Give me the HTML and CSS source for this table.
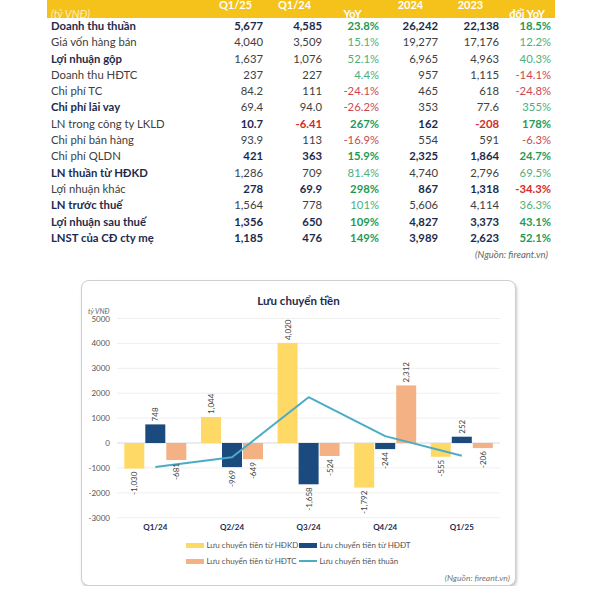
FILE: index.html
```html
<!DOCTYPE html>
<html lang="vi">
<head>
<meta charset="utf-8">
<title>Kết quả kinh doanh</title>
<link rel="stylesheet" href="styles.css">
</head>
<body>
<div class="report">
  <div class="thead">
    <div class="hcell unit"><span>&nbsp;</span><span>(tỷ VNĐ)</span></div>
    <div class="hcell"><span>Q1/25</span><span>&nbsp;</span></div>
    <div class="hcell"><span>Q1/24</span><span>&nbsp;</span></div>
    <div class="hcell"><span>&nbsp;</span><span>YoY</span></div>
    <div class="hcell"><span>2024</span><span>&nbsp;</span></div>
    <div class="hcell"><span>2023</span><span>&nbsp;</span></div>
    <div class="hcell"><span>&nbsp;</span><span>đổi YoY</span></div>
  </div>

  <div class="row"><div class="lbl b">Doanh thu thuần</div><div class="v b">5,677</div><div class="v b">4,585</div><div class="v g b">23.8%</div><div class="v b">26,242</div><div class="v b">22,138</div><div class="v g b">18.5%</div></div>
  <div class="row"><div class="lbl">Giá vốn hàng bán</div><div class="v">4,040</div><div class="v">3,509</div><div class="v g">15.1%</div><div class="v">19,277</div><div class="v">17,176</div><div class="v g">12.2%</div></div>
  <div class="row"><div class="lbl b">Lợi nhuận gộp</div><div class="v">1,637</div><div class="v">1,076</div><div class="v g">52.1%</div><div class="v">6,965</div><div class="v">4,963</div><div class="v g">40.3%</div></div>
  <div class="row"><div class="lbl">Doanh thu HĐTC</div><div class="v">237</div><div class="v">227</div><div class="v g">4.4%</div><div class="v">957</div><div class="v">1,115</div><div class="v r">-14.1%</div></div>
  <div class="row"><div class="lbl">Chi phí TC</div><div class="v">84.2</div><div class="v">111</div><div class="v r">-24.1%</div><div class="v">465</div><div class="v">618</div><div class="v r">-24.8%</div></div>
  <div class="row"><div class="lbl b">Chi phí lãi vay</div><div class="v">69.4</div><div class="v">94.0</div><div class="v r">-26.2%</div><div class="v">353</div><div class="v">77.6</div><div class="v g">355%</div></div>
  <div class="row"><div class="lbl">LN trong công ty LKLD</div><div class="v b">10.7</div><div class="v r b">-6.41</div><div class="v g b">267%</div><div class="v b">162</div><div class="v r b">-208</div><div class="v g b">178%</div></div>
  <div class="row"><div class="lbl">Chi phí bán hàng</div><div class="v">93.9</div><div class="v">113</div><div class="v r">-16.9%</div><div class="v">554</div><div class="v">591</div><div class="v r">-6.3%</div></div>
  <div class="row"><div class="lbl">Chi phí QLDN</div><div class="v b">421</div><div class="v b">363</div><div class="v g b">15.9%</div><div class="v b">2,325</div><div class="v b">1,864</div><div class="v g b">24.7%</div></div>
  <div class="row"><div class="lbl b">LN thuần từ HĐKD</div><div class="v">1,286</div><div class="v">709</div><div class="v g">81.4%</div><div class="v">4,740</div><div class="v">2,796</div><div class="v g">69.5%</div></div>
  <div class="row"><div class="lbl">Lợi nhuận khác</div><div class="v b">278</div><div class="v b">69.9</div><div class="v g b">298%</div><div class="v b">867</div><div class="v b">1,318</div><div class="v r b">-34.3%</div></div>
  <div class="row"><div class="lbl b">LN trước thuế</div><div class="v">1,564</div><div class="v">778</div><div class="v g">101%</div><div class="v">5,606</div><div class="v">4,114</div><div class="v g">36.3%</div></div>
  <div class="row"><div class="lbl b">Lợi nhuận sau thuế</div><div class="v b">1,356</div><div class="v b">650</div><div class="v g b">109%</div><div class="v b">4,827</div><div class="v b">3,373</div><div class="v g b">43.1%</div></div>
  <div class="row"><div class="lbl b">LNST của CĐ cty mẹ</div><div class="v b">1,185</div><div class="v b">476</div><div class="v g b">149%</div><div class="v b">3,989</div><div class="v b">2,623</div><div class="v g b">52.1%</div></div>

  <div class="src">(Nguồn: fireant.vn)</div>
</div>

<div class="card">
  <div class="ctitle">Lưu chuyển tiền</div>
  <svg class="chart" width="433" height="228" viewBox="0 0 433 228">
    <g class="grid">
      <line x1="35" x2="418" y1="10.5" y2="10.5"/>
      <line x1="35" x2="418" y1="35.4" y2="35.4"/>
      <line x1="35" x2="418" y1="60.3" y2="60.3"/>
      <line x1="35" x2="418" y1="85.2" y2="85.2"/>
      <line x1="35" x2="418" y1="110.1" y2="110.1"/>
      <line x1="35" x2="418" y1="159.9" y2="159.9"/>
      <line x1="35" x2="418" y1="184.8" y2="184.8"/>
      <line x1="35" x2="418" y1="209.7" y2="209.7"/>
    </g>
    <line class="zero" x1="35" x2="418" y1="135" y2="135"/>
    <text class="unitlbl" x="6" y="5.5">tỷ VNĐ</text>
    <g class="ylbl">
      <text x="28" y="13.5">5000</text>
      <text x="28" y="38.4">4000</text>
      <text x="28" y="63.3">3000</text>
      <text x="28" y="88.2">2000</text>
      <text x="28" y="113.1">1000</text>
      <text x="28" y="138">0</text>
      <text x="28" y="162.9">-1000</text>
      <text x="28" y="187.8">-2000</text>
      <text x="28" y="212.7">-3000</text>
    </g>
    <g class="bars">
      <rect class="y" x="42.3" y="135" width="20" height="25.6"/>
      <rect class="n" x="63.3" y="116.4" width="20" height="18.6"/>
      <rect class="s" x="84.3" y="135" width="20" height="17"/>

      <rect class="y" x="119" y="109" width="20" height="26"/>
      <rect class="n" x="140" y="135" width="20" height="24.1"/>
      <rect class="s" x="161" y="135" width="20" height="16.2"/>

      <rect class="y" x="195.6" y="34.9" width="20" height="100.1"/>
      <rect class="n" x="216.6" y="135" width="20" height="41.3"/>
      <rect class="s" x="237.6" y="135" width="20" height="13"/>

      <rect class="y" x="272.2" y="135" width="20" height="44.6"/>
      <rect class="n" x="293.2" y="135" width="20" height="6.1"/>
      <rect class="s" x="314.2" y="77.4" width="20" height="57.6"/>

      <rect class="y" x="348.8" y="135" width="20" height="13.8"/>
      <rect class="n" x="369.8" y="128.7" width="20" height="6.3"/>
      <rect class="s" x="390.8" y="135" width="20" height="5.1"/>
    </g>
    <polyline class="net" points="73.3,159 150,149.3 226.6,89.2 303.2,128.1 379.8,147.7"/>
    <g class="vlbl">
      <text class="neg" transform="translate(55.3,163.6) rotate(-90)">-1,030</text>
      <text transform="translate(76.3,113.4) rotate(-90)">748</text>
      <text class="neg" transform="translate(97.3,155) rotate(-90)">-681</text>

      <text transform="translate(132,106) rotate(-90)">1,044</text>
      <text class="neg" transform="translate(153,162.1) rotate(-90)">-969</text>
      <text class="neg" transform="translate(174,154.2) rotate(-90)">-649</text>

      <text transform="translate(208.6,31.9) rotate(-90)">4,020</text>
      <text class="neg" transform="translate(229.6,179.3) rotate(-90)">-1,658</text>
      <text class="neg" transform="translate(250.6,151) rotate(-90)">-524</text>

      <text class="neg" transform="translate(285.2,182.6) rotate(-90)">-1,792</text>
      <text class="neg" transform="translate(306.2,144.1) rotate(-90)">-244</text>
      <text transform="translate(327.2,74.4) rotate(-90)">2,312</text>

      <text class="neg" transform="translate(361.8,151.8) rotate(-90)">-555</text>
      <text transform="translate(382.8,125.7) rotate(-90)">252</text>
      <text class="neg" transform="translate(403.8,143.1) rotate(-90)">-206</text>
    </g>
    <g class="xlbl">
      <text x="73.3" y="222">Q1/24</text>
      <text x="150" y="222">Q2/24</text>
      <text x="226.6" y="222">Q3/24</text>
      <text x="303.2" y="222">Q4/24</text>
      <text x="379.8" y="222">Q1/25</text>
    </g>
  </svg>
  <div class="legend">
    <div class="li"><span class="sw sw-y"></span>Lưu chuyển tiền từ HĐKD</div>
    <div class="li"><span class="sw sw-n"></span>Lưu chuyển tiền từ HĐĐT</div>
    <div class="li"><span class="sw sw-s"></span>Lưu chuyển tiền từ HĐTC</div>
    <div class="li"><span class="sw sw-l"></span>Lưu chuyển tiền thuần</div>
  </div>
  <div class="csrc">(Nguồn: fireant.vn)</div>
</div>
</body>
</html>
```
FILE: styles.css
```css
body {
  margin: 0;
  background: #fff;
  font-family: Lato, "Open Sans", "Noto Sans", sans-serif;
}

.report {
  width: 508px;
  margin-left: 47px;
}

.thead,
.row {
  display: grid;
  grid-template-columns: 161px 59px 59px 57px 59px 61px 52px;
}

.thead {
  height: 18px;
  overflow: hidden;
  background: #f4c21b;
  color: #fff;
  font-size: 11px;
  font-weight: 700;
}

.hcell {
  display: flex;
  flex-direction: column;
  justify-content: flex-end;
  align-items: center;
  padding: 0 4px 3px 0;
  line-height: 9px;
  white-space: nowrap;
}

.hcell.unit {
  align-items: flex-start;
  padding-left: 4px;
  font-weight: 400;
  font-style: italic;
  color: rgba(255, 255, 255, 0.72);
}

.row {
  height: 16.3px;
  line-height: 16.3px;
  font-size: 11.3px;
  color: #404040;
}

.lbl {
  padding-left: 4px;
  white-space: nowrap;
}

.v {
  text-align: right;
  padding-right: 4px;
  white-space: nowrap;
}

.b {
  font-weight: 700;
  color: #1c2b4d;
}

.g { color: #4fae7d; }
.g.b { color: #1f9a56; }
.r { color: #c84a51; }
.r.b { color: #d42a2a; }

.src {
  margin-top: 2px;
  padding-right: 7px;
  text-align: right;
  font-size: 9.5px;
  line-height: 14px;
  font-style: italic;
  color: #666;
}

.card {
  width: 433px;
  margin: 18px 0 0 81px;
  padding-bottom: 1px;
  border: 1px solid #cfcfcf;
  border-radius: 8px;
  box-shadow: 1px 2px 3px rgba(0, 0, 0, 0.22);
  background: #fff;
}

.ctitle {
  margin-top: 13px;
  text-align: center;
  font-size: 11.5px;
  line-height: 14px;
  font-weight: 700;
  color: #1c2b4d;
}

.chart {
  display: block;
  font-family: Lato, "Open Sans", sans-serif;
}

.grid line {
  stroke: #efefef;
  stroke-width: 1;
}

.zero {
  stroke: #d9d9d9;
  stroke-width: 1;
}

.unitlbl {
  font-size: 7px;
  font-style: italic;
  fill: #666;
}

.ylbl text {
  font-size: 8px;
  fill: #555;
  text-anchor: end;
}

.bars .y { fill: #ffd966; }
.bars .n { fill: #1b4a7e; }
.bars .s { fill: #f4b183; }

.net {
  fill: none;
  stroke: #4bacc6;
  stroke-width: 2;
  stroke-linejoin: round;
}

.vlbl text {
  font-size: 8px;
  fill: #444;
  text-anchor: start;
}

.vlbl text.neg {
  text-anchor: end;
}

.xlbl text {
  font-size: 8px;
  font-weight: 700;
  fill: #1c2b4d;
  text-anchor: middle;
}

.legend {
  display: grid;
  grid-template-columns: auto auto;
  justify-content: center;
  column-gap: 1px;
  margin-top: 1px;
  font-size: 8px;
  color: #555;
}

.li {
  display: flex;
  align-items: center;
  gap: 2px;
  height: 16px;
  white-space: nowrap;
}

.sw {
  display: inline-block;
  width: 18px;
  height: 5px;
}

.sw-y { background: #ffd966; }
.sw-n { background: #1b4a7e; }
.sw-s { background: #f4b183; }
.sw-l { height: 2px; background: #4bacc6; }

.csrc {
  margin-top: 3px;
  padding-right: 5px;
  text-align: right;
  font-size: 8.5px;
  line-height: 12px;
  font-style: italic;
  color: #777;
}
```
